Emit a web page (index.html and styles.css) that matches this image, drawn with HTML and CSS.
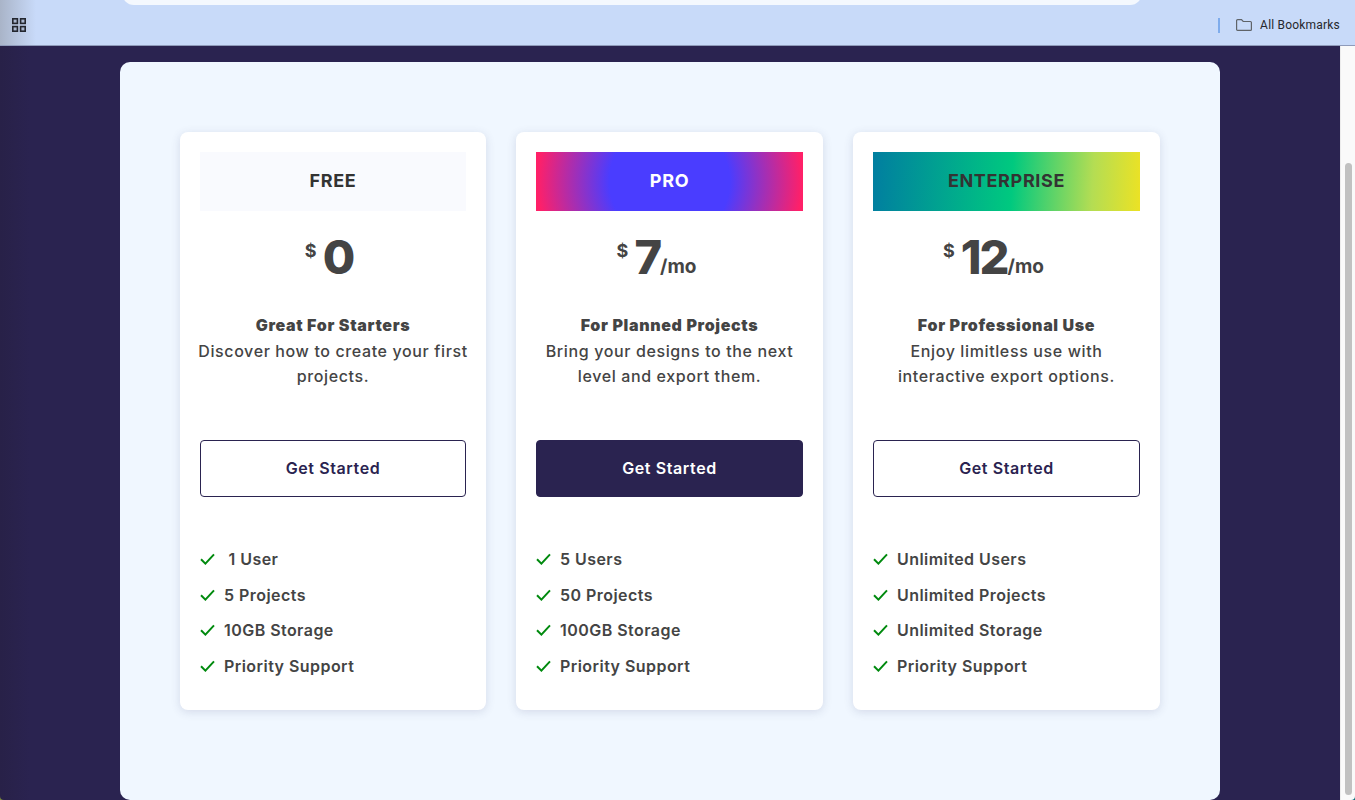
FILE: index.html
```html
<!DOCTYPE html>
<html lang="en">
<head>
<meta charset="UTF-8">
<meta name="viewport" content="width=device-width, initial-scale=1.0">
<title>Pricing</title>
<link rel="stylesheet" href="styles.css">
</head>
<body>
<header class="toolbar">
    <div class="address-bar"></div>
    <div class="bookmarks">
        <svg class="apps-icon" width="14" height="14" viewBox="0 0 14 14" fill="#a9b6cf" stroke="#23262e" stroke-width="1.6">
            <rect x="0.8" y="0.8" width="4.6" height="4.6"/>
            <rect x="8.6" y="0.8" width="4.6" height="4.6"/>
            <rect x="0.8" y="8.6" width="4.6" height="4.6"/>
            <rect x="8.6" y="8.6" width="4.6" height="4.6"/>
        </svg>
        <span class="separator"></span>
        <svg class="folder-icon" width="16" height="12" viewBox="0 0 16 12" fill="none" stroke="#5f6368" stroke-width="1.2">
            <path d="M0.6 1.6a1 1 0 0 1 1-1h3.9l1.7 1.9h7.2a1 1 0 0 1 1 1v6.9a1 1 0 0 1-1 1H1.6a1 1 0 0 1-1-1z"/>
        </svg>
        <span class="bookmarks-label">All Bookmarks</span>
    </div>
</header>

<div class="viewport">
    <main class="page">
        <section class="panel">
            <div class="plans">
                <article class="plan">
                    <h2 class="plan-name name-free">FREE</h2>
                    <p class="price price-free"><sup>$</sup><span class="amount">0</span></p>
                    <p class="blurb"><strong>Great For Starters</strong><br>Discover how to create your first projects.</p>
                    <a class="btn" href="#">Get Started</a>
                    <ul class="features">
                        <li><svg class="check" viewBox="0 0 15 12"><path d="M1 6.2l4.4 4.4L14 1.4"/></svg><span>&nbsp;1 User</span></li>
                        <li><svg class="check" viewBox="0 0 15 12"><path d="M1 6.2l4.4 4.4L14 1.4"/></svg><span>5 Projects</span></li>
                        <li><svg class="check" viewBox="0 0 15 12"><path d="M1 6.2l4.4 4.4L14 1.4"/></svg><span>10GB Storage</span></li>
                        <li><svg class="check" viewBox="0 0 15 12"><path d="M1 6.2l4.4 4.4L14 1.4"/></svg><span>Priority Support</span></li>
                    </ul>
                </article>

                <article class="plan">
                    <h2 class="plan-name name-pro">PRO</h2>
                    <p class="price"><sup>$</sup><span class="amount">7</span><span class="per">/mo</span></p>
                    <p class="blurb"><strong>For Planned Projects</strong><br>Bring your designs to the next level and export them.</p>
                    <a class="btn btn-solid" href="#">Get Started</a>
                    <ul class="features">
                        <li><svg class="check" viewBox="0 0 15 12"><path d="M1 6.2l4.4 4.4L14 1.4"/></svg><span>5 Users</span></li>
                        <li><svg class="check" viewBox="0 0 15 12"><path d="M1 6.2l4.4 4.4L14 1.4"/></svg><span>50 Projects</span></li>
                        <li><svg class="check" viewBox="0 0 15 12"><path d="M1 6.2l4.4 4.4L14 1.4"/></svg><span>100GB Storage</span></li>
                        <li><svg class="check" viewBox="0 0 15 12"><path d="M1 6.2l4.4 4.4L14 1.4"/></svg><span>Priority Support</span></li>
                    </ul>
                </article>

                <article class="plan">
                    <h2 class="plan-name name-enterprise">ENTERPRISE</h2>
                    <p class="price"><sup>$</sup><span class="amount">12</span><span class="per">/mo</span></p>
                    <p class="blurb"><strong>For Professional Use</strong><br>Enjoy limitless use with interactive export options.</p>
                    <a class="btn" href="#">Get Started</a>
                    <ul class="features">
                        <li><svg class="check" viewBox="0 0 15 12"><path d="M1 6.2l4.4 4.4L14 1.4"/></svg><span>Unlimited Users</span></li>
                        <li><svg class="check" viewBox="0 0 15 12"><path d="M1 6.2l4.4 4.4L14 1.4"/></svg><span>Unlimited Projects</span></li>
                        <li><svg class="check" viewBox="0 0 15 12"><path d="M1 6.2l4.4 4.4L14 1.4"/></svg><span>Unlimited Storage</span></li>
                        <li><svg class="check" viewBox="0 0 15 12"><path d="M1 6.2l4.4 4.4L14 1.4"/></svg><span>Priority Support</span></li>
                    </ul>
                </article>
            </div>
        </section>
    </main>
    <div class="scrollbar"><div class="scrollbar-thumb"></div></div>
</div>
</body>
</html>
```

FILE: styles.css
```css
* {
    box-sizing: border-box;
}
html, body {
    height: 100%;
}
body {
    margin: 0;
    height: 800px;
    overflow: hidden;
    display: flex;
    flex-direction: column;
    font-family: Inter, "Liberation Sans", sans-serif;
    color: #444;
    /* wallpaper, only seen in the window's bottom corners */
    background: linear-gradient(to right, #7c8a3c, #0b6c78);
}

/* browser chrome */
.toolbar {
    height: 46px;
    flex: none;
    background: linear-gradient(to right, #a9b4c8 0, #c8daf9 36px);
    background-color: #c8daf9;
    border-bottom: 1px solid #8f9bba;
}
.address-bar {
    height: 15px;
    margin: -10px 213px 0 122px;
    background-color: #f4f8fe;
    border-radius: 0 0 12px 12px;
}
.bookmarks {
    height: 40px;
    display: flex;
    align-items: center;
    padding: 0 15px 0 12px;
}
.apps-icon {
    flex: none;
}
.separator {
    width: 2px;
    height: 15px;
    margin-left: auto;
    background-color: #7facec;
}
.folder-icon {
    margin-left: 16px;
    flex: none;
}
.bookmarks-label {
    margin-left: 8px;
    font-family: Roboto, sans-serif;
    font-size: 12px;
    letter-spacing: 0.2px;
    color: #26282c;
    white-space: nowrap;
}

/* page */
.viewport {
    flex: 1;
    min-height: 0;
    display: flex;
    overflow: hidden;
    border-radius: 0 0 4px 4px;
}
.page {
    flex: 1;
    padding-top: 16px;
    background: linear-gradient(to right, #282148 0, #2a2350 30px);
}
.panel {
    width: 1100px;
    height: 738px;
    margin: 0 auto;
    padding: 70px 60px;
    background-color: #f0f7ff;
    border-radius: 10px;
}
.plans {
    display: grid;
    grid-template-columns: 306px 307px 307px;
    gap: 30px;
}
.plan {
    height: 578px;
    padding: 20px;
    background-color: #fff;
    border-radius: 8px;
    box-shadow: 0 2px 10px rgba(60, 70, 120, 0.16);
}
.plan-name {
    height: 59px;
    margin: 0;
    padding-bottom: 2px;
    display: flex;
    align-items: center;
    justify-content: center;
    font-size: 18px;
    font-weight: 700;
    letter-spacing: 0.65px;
    color: #333;
}
.name-free {
    background-color: #f9fafe;
}
.name-pro {
    color: #fff;
    background: radial-gradient(circle, #4a3dff 44%, #ff2068 97%);
}
.name-enterprise {
    background: linear-gradient(93deg, #017ea0 0, #00c97f 52%, #b4dd53 82%, #ece224 100%);
}
.price {
    height: 46px;
    margin: 23px 0 0;
    padding-right: 26px;
    display: flex;
    align-items: flex-end;
    justify-content: center;
    font-weight: 800;
    line-height: 46px;
}
.price-free {
    padding-right: 8px;
}
.price sup {
    align-self: flex-start;
    margin-right: 6px;
    font-size: 18px;
    font-weight: 700;
    line-height: 34px;
}
.amount {
    font-size: 47px;
    letter-spacing: -2px;
}
.per {
    font-size: 19px;
    font-weight: 700;
    line-height: 38px;
    margin: 0 0 -6px 0;
}
.blurb {
    height: 78px;
    margin: 33px -6px 0;
    text-align: center;
    font-size: 16px;
    font-weight: 500;
    line-height: 25.6px;
    letter-spacing: 0.62px;
}
.blurb strong {
    font-weight: 900;
    letter-spacing: 0.65px;
}
.btn {
    display: flex;
    align-items: center;
    justify-content: center;
    height: 57px;
    margin-top: 49px;
    padding-bottom: 2px;
    font-size: 16px;
    font-weight: 600;
    letter-spacing: 0.6px;
    color: #2a2350;
    text-decoration: none;
    border: 1px solid #2a2350;
    border-radius: 4px;
}
.btn-solid {
    color: #fff;
    background-color: #2a2350;
}
.features {
    list-style: none;
    margin: 44.4px 0 0;
    padding: 0;
}
.features li {
    height: 35.6px;
    display: flex;
    align-items: center;
    font-size: 16px;
    font-weight: 600;
    letter-spacing: 0.45px;
    white-space: pre;
}
.check {
    width: 15px;
    height: 12px;
    margin-right: 9px;
    flex: none;
    fill: none;
    stroke: #008a0e;
    stroke-width: 2;
}

/* fake scrollbar, the picture is scrolled */
.scrollbar {
    width: 15px;
    flex: none;
    padding: 117px 3px 5px 4px;
    background-color: #fafafa;
    border-left: 1px solid #ececec;
}
.scrollbar-thumb {
    height: 100%;
    background-color: #c1c1c1;
    border-radius: 4px;
}
```
